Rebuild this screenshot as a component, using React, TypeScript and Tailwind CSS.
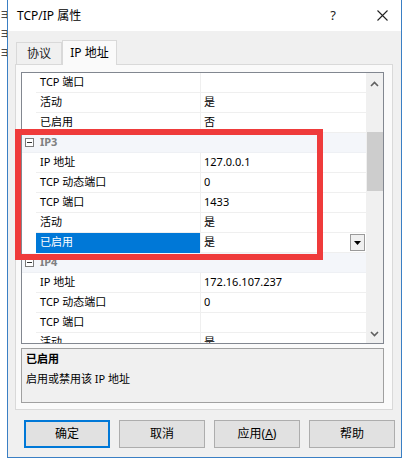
import React from "react";

type Row =
  | { kind: "cat"; label: string }
  | { kind: "prop"; name: string; value: string; selected?: boolean };

const rows: Row[] = [
  { kind: "prop", name: "TCP 端口", value: "" },
  { kind: "prop", name: "活动", value: "是" },
  { kind: "prop", name: "已启用", value: "否" },
  { kind: "cat", label: "IP3" },
  { kind: "prop", name: "IP 地址", value: "127.0.0.1" },
  { kind: "prop", name: "TCP 动态端口", value: "0" },
  { kind: "prop", name: "TCP 端口", value: "1433" },
  { kind: "prop", name: "活动", value: "是" },
  { kind: "prop", name: "已启用", value: "是", selected: true },
  { kind: "cat", label: "IP4" },
  { kind: "prop", name: "IP 地址", value: "172.16.107.237" },
  { kind: "prop", name: "TCP 动态端口", value: "0" },
  { kind: "prop", name: "TCP 端口", value: "" },
  { kind: "prop", name: "活动", value: "是" },
];

function GridRow({ row }: { row: Row }) {
  if (row.kind === "cat") {
    return (
      <div className="flex h-[20px] shrink-0 items-center bg-[#f4f6fa] border-b border-[#eef0f4]">
        <div className="w-[14px] h-full flex items-center justify-center">
          <div className="w-[9px] h-[9px] border border-[#7a7a7a] bg-white flex items-center justify-center">
            <div className="w-[5px] h-px bg-[#333]" />
          </div>
        </div>
        <span className="pl-[4px] text-[11px] font-bold text-[#808080]">{row.label}</span>
      </div>
    );
  }
  return (
    <div className="flex h-[20px] shrink-0 items-stretch">
      <div className="w-[14px] bg-white" />
      <div
        className={
          row.selected
            ? "w-[164px] flex items-center pl-[4px] bg-[#0078d7] text-white border-b border-[#0078d7]"
            : "w-[164px] flex items-center pl-[4px] text-[#000] border-b border-[#efefef]"
        }
      >
        <span className="text-[11px]">{row.name}</span>
      </div>
      <div className="w-px bg-[#efefef]" />
      <div className="flex-1 flex items-center pl-[3px] border-b border-[#efefef] relative">
        <span className="text-[11px] text-black">{row.value}</span>
        {row.selected && (
          <div className="absolute right-[1px] top-[1px] w-[15px] h-[17px] border border-[#9a9a9a] bg-[#f0f0f0] flex items-center justify-center">
            <svg width="7" height="4" viewBox="0 0 7 4">
              <path d="M0 0 H7 L3.5 4 Z" fill="#000" />
            </svg>
          </div>
        )}
      </div>
    </div>
  );
}

function Chevron({ up }: { up?: boolean }) {
  return (
    <svg width="9" height="6" viewBox="0 0 9 6">
      <path
        d={up ? "M1 5 L4.5 1.5 L8 5" : "M1 1 L4.5 4.5 L8 1"}
        stroke="#606060"
        strokeWidth="1.6"
        fill="none"
      />
    </svg>
  );
}

export default function App() {
  return (
    <div className="relative w-[409px] h-[465px] bg-white overflow-hidden font-['Noto_Sans','Noto_Sans_CJK_SC',sans-serif] text-black">
      {/* background window glimpse */}
      <div className="absolute left-0 top-[10px] w-[7px] flex flex-col gap-[9px] text-[9px] leading-[10px] text-[#222]">
        <span>ヨ</span>
        <span>ヨ</span>
        <span>ヨ</span>
      </div>

      <div className="relative ml-[7px] w-[395px] h-[458px] border-x border-b border-[#3a7fc4] bg-white flex flex-col">
        {/* title bar */}
        <div className="h-[31px] shrink-0 flex items-center bg-white">
          <span className="pl-[9px] text-[12px] text-black">TCP/IP 属性</span>
          <span className="ml-auto mr-[40px] text-[13px] text-[#222]">?</span>
          <span className="mr-[13px] w-[12px] flex items-center justify-center">
            <svg width="11" height="11" viewBox="0 0 11 11">
              <path d="M0.5 0.5 L10.5 10.5 M10.5 0.5 L0.5 10.5" stroke="#222" strokeWidth="1.1" />
            </svg>
          </span>
        </div>

        {/* body */}
        <div className="flex-1 bg-[#f0f0f0] flex flex-col">
          {/* tabs */}
          <div className="flex items-end h-[33px] pl-[8px] shrink-0">
            <div className="h-[22px] w-[46px] flex items-center justify-center border border-b-0 border-[#d9d9d9] bg-[#f0f0f0] text-[12px] text-[#222]">
              协议
            </div>
            <div className="relative top-px h-[25px] w-[55px] flex items-center justify-center border border-b-0 border-[#d9d9d9] bg-[#fafafa] text-[12px] text-black z-10">
              IP 地址
            </div>
          </div>

          {/* tab panel */}
          <div className="ml-[7px] w-[378px] h-[346px] border border-[#d9d9d9] bg-[#fafafa] flex flex-col pl-[5px] pt-[7px]">
            {/* property grid */}
            <div className="w-[363px] h-[272px] border border-[#828790] bg-white flex overflow-hidden">
              <div className="flex-1 flex flex-col overflow-hidden">
                {rows.map((r, i) => (
                  <GridRow key={i} row={r} />
                ))}
              </div>
              <div className="w-[17px] bg-[#f0f0f0] flex flex-col items-center">
                <div className="h-[21px] flex items-center justify-center">
                  <Chevron up />
                </div>
                <div className="h-[38px]" />
                <div className="w-[16px] h-[59px] bg-[#cdcdcd]" />
                <div className="flex-1" />
                <div className="h-[18px] flex items-center justify-center">
                  <Chevron />
                </div>
              </div>
            </div>

            {/* description */}
            <div className="mt-[4px] w-[363px] h-[55px] border border-[#a0a0a0] bg-[#f0f0f0] px-[4px] pt-[2px]">
              <div className="text-[11px] font-bold leading-[16px]">已启用</div>
              <div className="mt-[4px] text-[11px] leading-[16px]">启用或禁用该 IP 地址</div>
            </div>
          </div>

          {/* buttons */}
          <div className="flex gap-[9px] pl-[16px] mt-[10px]">
            <button className="w-[86px] h-[28px] border-2 border-[#0078d7] bg-[#e1e1e1] text-[12px] text-black">
              确定
            </button>
            <button className="w-[86px] h-[28px] border border-[#adadad] bg-[#e1e1e1] text-[12px] text-black">
              取消
            </button>
            <button className="w-[86px] h-[28px] border border-[#adadad] bg-[#e1e1e1] text-[12px] text-black">
              应用(<span className="underline">A</span>)
            </button>
            <button className="w-[86px] h-[28px] border border-[#adadad] bg-[#e1e1e1] text-[12px] text-black">
              帮助
            </button>
          </div>
        </div>
      </div>

      {/* red annotation rectangle */}
      <div className="absolute left-[15px] top-[129px] w-[308px] h-[131px] border-[6px] border-[#ef3b3b] pointer-events-none" />
    </div>
  );
}
